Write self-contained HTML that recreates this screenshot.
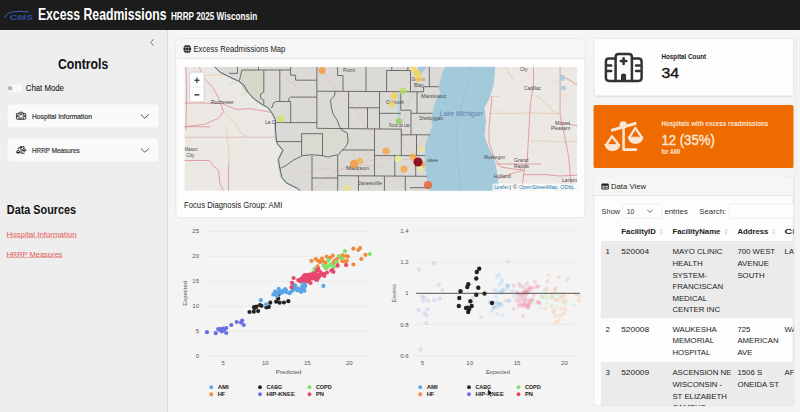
<!DOCTYPE html><html><head><meta charset="utf-8"><style>*{margin:0;padding:0}html,body{width:800px;height:412px;overflow:hidden;background:#f4f4f4}svg{display:block}</style></head><body><svg width="800" height="412" viewBox="0 0 800 412" font-family="Liberation Sans, sans-serif"><rect x="0" y="0" width="800" height="412" fill="#f4f4f4"/>
<rect x="0" y="30" width="167" height="382" fill="#eeeeee"/>
<rect x="167" y="30" width="1" height="382" fill="#d9d9d9"/>
<rect x="0" y="0" width="800" height="30" fill="#1c1c1c"/>
<path d="M4.4 17.8 Q7 12.8 12 12 Q18 11 28.8 11.9" stroke="#34549f" stroke-width="1.2" fill="none"/>
<text x="9.4" y="20" font-size="7.6" font-weight="bold" fill="#2d4d9c" textLength="23.6" lengthAdjust="spacingAndGlyphs" font-style="italic">CMS</text>
<text x="37.9" y="19.65" font-size="16.1" font-weight="bold" fill="#ffffff" textLength="128.6" lengthAdjust="spacingAndGlyphs">Excess Readmissions</text>
<text x="170.9" y="19.65" font-size="10.3" font-weight="bold" fill="#ffffff" textLength="86.4" lengthAdjust="spacingAndGlyphs">HRRP 2025 Wisconsin</text>
<path d="M153.8 39.2 L150.4 42.4 L153.7 45.6" stroke="#6a6a6a" stroke-width="0.9" fill="none"/>
<text x="57.9" y="68.8" font-size="15.3" font-weight="bold" fill="#111" textLength="50.4" lengthAdjust="spacingAndGlyphs">Controls</text>
<rect x="8" y="84.5" width="14" height="8" rx="1.5" fill="#f9f9f9"/>
<circle cx="10.1" cy="88.3" r="2.3" fill="#b5b5b5"/>
<text x="25.75" y="91.3" font-size="8.3" fill="#222" textLength="38.2" lengthAdjust="spacingAndGlyphs" stroke="#222" stroke-width="0.1">Chat Mode</text>
<rect x="7" y="104" width="152" height="24" rx="3" fill="#fafafa" stroke="#e6e6e6" stroke-width="0.6"/>
<text x="32" y="119" font-size="7.9" fill="#333" textLength="59.9" lengthAdjust="spacingAndGlyphs" stroke="#333" stroke-width="0.2">Hospital Information</text>
<path d="M140.8 114.5 L144.8 118.2 L148.8 114.5" stroke="#444" stroke-width="0.9" fill="none"/>
<rect x="7" y="138" width="152" height="24" rx="3" fill="#fafafa" stroke="#e6e6e6" stroke-width="0.6"/>
<text x="32" y="153" font-size="7.9" fill="#333" textLength="47.6" lengthAdjust="spacingAndGlyphs" stroke="#333" stroke-width="0.2">HRRP Measures</text>
<path d="M140.8 148.5 L144.8 152.2 L148.8 148.5" stroke="#444" stroke-width="0.9" fill="none"/>
<text x="6.8" y="214.2" font-size="12" font-weight="bold" fill="#111" textLength="69.3" lengthAdjust="spacingAndGlyphs">Data Sources</text>
<text x="6.45" y="236.6" font-size="8" fill="#e35a56" textLength="70.3" lengthAdjust="spacingAndGlyphs">Hospital Information</text>
<rect x="6.45" y="237.4" width="70.3" height="0.7" fill="#ee8d89"/>
<text x="6.45" y="256.5" font-size="8" fill="#e35a56" textLength="55.9" lengthAdjust="spacingAndGlyphs">HRRP Measures</text>
<rect x="6.45" y="257.3" width="55.9" height="0.7" fill="#ee8d89"/>
<rect x="175.8" y="38.6" width="409.2" height="179.2" rx="4" fill="#fdfdfd" stroke="#e2e2e2" stroke-width="0.8"/>
<path d="M176.2 58.4 L176.2 43 Q176.2 39 180.2 39 L580.6 39 Q584.6 39 584.6 43 L584.6 58.4 Z" fill="#f6f6f6"/>
<rect x="176.2" y="58.2" width="408.4" height="0.8" fill="#e3e3e3"/>
<circle cx="187.3" cy="49" r="3.9" fill="#1a1a1a"/><g stroke="#f6f6f6" stroke-width="0.45" fill="none"><ellipse cx="187.3" cy="49" rx="1.5" ry="3.7"/><line x1="183.5" y1="47.6" x2="191.1" y2="47.6"/><line x1="183.5" y1="50.4" x2="191.1" y2="50.4"/></g>
<text x="193.5" y="51.75" font-size="8.2" fill="#222" textLength="91.8" lengthAdjust="spacingAndGlyphs">Excess Readmissions Map</text>
<clipPath id="mclip"><rect x="184.4" y="66.7" width="393.0" height="124.10000000000001"/></clipPath>
<g clip-path="url(#mclip)">
<rect x="184.4" y="66.7" width="393.0" height="124.10000000000001" fill="#ece9e4"/>
<g fill="none" stroke-linejoin="round">
<path d="M222.0 108.6 L228.0 116.5 L236.0 124.4 L239.0 131.0 L243.0 134.0 L248.0 137.0" stroke="#e6c3a3" stroke-width="0.7"/>
<path d="M226.5 126.0 L227.0 137.0 L228.9 150.0 L228.9 162.0" stroke="#e6c3a3" stroke-width="0.7"/>
<path d="M489.0 113.4 L510.0 113.4 L530.0 113.0 L553.0 113.4 L560.0 114.0" stroke="#e6c3a3" stroke-width="0.7"/>
<path d="M530.0 141.0 L545.0 141.0 L560.0 142.0 L577.4 141.0" stroke="#e6c3a3" stroke-width="0.7"/>
<path d="M505.0 66.7 L510.0 75.0 L514.0 81.0" stroke="#e6c3a3" stroke-width="0.7"/>
<path d="M536.0 95.0 L545.0 103.0 L553.0 111.0 L560.0 114.0" stroke="#e6c3a3" stroke-width="0.7"/>
<path d="M484.6 96.6 L500.0 96.6" stroke="#e6c3a3" stroke-width="0.7"/>
<path d="M204.5 75.5 L226.6 74.7" stroke="#e6c3a3" stroke-width="0.7"/>
<path d="M184.4 137.2 L270.0 137.2 L276.5 137.2" stroke="#d6b8b8" stroke-width="0.8"/>
<path d="M184.4 103.0 L205.0 103.0 L222.0 103.5 L236.0 109.4 L250.0 108.6 L267.6 111.7 L276.0 114.0" stroke="#e0959f" stroke-width="0.9"/>
<path d="M184.4 126.7 L204.5 124.4 L218.7 118.0 L223.4 111.7 L222.0 107.0" stroke="#e0959f" stroke-width="0.9"/>
<path d="M199.0 66.7 L204.5 78.6 L213.2 88.0 L217.9 96.8 L221.9 107.0" stroke="#e0959f" stroke-width="0.9"/>
<path d="M186.0 66.7 L186.5 90.0 L186.0 130.0" stroke="#e0959f" stroke-width="0.9"/>
<path d="M184.4 126.8 L210.0 126.8" stroke="#e0959f" stroke-width="0.9"/>
<path d="M184.4 160.5 L209.6 160.5 L212.0 164.5 L218.5 170.0 L220.0 183.7 L223.3 190.8" stroke="#e0959f" stroke-width="0.9"/>
<path d="M228.9 162.0 L228.5 175.0 L228.5 190.8" stroke="#e0959f" stroke-width="0.9"/>
<path d="M240.8 83.4 L247.0 92.8" stroke="#e0959f" stroke-width="0.9"/>
<path d="M560.1 66.7 L560.1 115.0 L564.1 133.3 L568.7 157.7 L571.7 192.0" stroke="#e0959f" stroke-width="0.9"/>
<path d="M560.1 75.0 L571.0 81.0 L575.0 84.0 L577.4 84.0" stroke="#e0959f" stroke-width="0.9"/>
<path d="M533.5 66.7 L533.5 84.3 L530.5 102.7 L529.0 127.2 L527.4 157.7 L524.3 170.0 L521.3 192.0" stroke="#e0959f" stroke-width="0.9"/>
<path d="M492.0 96.6 L489.0 127.0 L489.0 142.0 L494.0 157.7 L501.0 167.0 L513.0 169.0 L524.3 170.0" stroke="#e0959f" stroke-width="0.9"/>
<path d="M523.0 174.6 L545.0 174.6 L560.0 176.0 L580.0 175.0" stroke="#e0959f" stroke-width="0.9"/>
<path d="M484.6 164.0 L500.0 164.0 L520.0 164.0 L541.0 164.0" stroke="#e0959f" stroke-width="0.9"/>
<path d="M560.1 122.0 L577.4 126.0" stroke="#e0959f" stroke-width="0.9"/>
<path d="M495.0 180.0 L510.0 174.0 L524.3 170.0" stroke="#e0959f" stroke-width="0.9"/>
</g>
<ellipse cx="232" cy="83" rx="5" ry="2" fill="#d3dfc6" opacity="0.45"/>
<ellipse cx="243" cy="95" rx="4" ry="2" fill="#d3dfc6" opacity="0.45"/>
<ellipse cx="500" cy="112" rx="3" ry="1.5" fill="#d3dfc6" opacity="0.45"/>
<ellipse cx="555" cy="82" rx="3" ry="2" fill="#d3dfc6" opacity="0.45"/>
<ellipse cx="566" cy="96" rx="2" ry="1.5" fill="#d3dfc6" opacity="0.45"/>
<ellipse cx="196" cy="192" rx="3" ry="1" fill="#d3dfc6" opacity="0.45"/>
<ellipse cx="215" cy="150" rx="2" ry="1" fill="#d3dfc6" opacity="0.45"/>
<path d="M214.8 66.7 L445.5 66.7 L442.0 73.6 L439.3 83.2 L438.5 86.7 L440.2 92.8 L436.0 100.0 L434.0 106.0 L432.5 113.0 L431.0 120.0 L432.5 126.0 L429.0 134.0 L426.5 141.0 L424.9 146.3 L424.5 159.0 L425.8 171.6 L427.0 180.4 L429.0 188.0 L429.5 191.5 L301.0 191.5 L297.5 188.4 L286.3 182.8 L281.8 177.2 L279.6 167.1 L278.5 159.3 L283.0 150.3 L277.4 143.6 L276.3 139.1 L275.5 129.0 L275.5 119.6 L272.3 113.3 L267.6 107.3 L261.3 103.9 L253.4 98.3 L247.9 92.0 L243.9 84.9 L238.4 81.0 L229.7 77.0 L220.3 72.3 Z" fill="#dcdad6"/>
<path d="M241.9 70 L263.75 70 L263.75 92 L260.6 94 L260.6 97.75 L263.75 100.25 L263.75 104.4 L255 100.25 L248.75 93.4 L246.25 86.5 L239.4 80.9 Z" fill="#d3d8c8"/>
<path d="M301.6 133.7 L322.5 133.7 L322.5 156 L301.6 155.6 Z" fill="#d9dbd1"/>
<path d="M322.5 128.3 L339.3 128.3 L341.7 130 L347.3 133.2 L348.1 142 L345.7 146.8 L340.9 151.6 L338.5 154.8 L332.9 155.6 L328.1 157.2 L322.5 155.6 Z" fill="#d9dbd1"/>
<ellipse cx="562.5" cy="78" rx="2.2" ry="3" fill="#a9cde0"/><ellipse cx="563.5" cy="88" rx="2.5" ry="2.2" fill="#a9cde0"/>
<g fill="none" stroke-linejoin="round">
<path d="M322.0 70.0 L330.0 80.0 L340.0 95.0 L352.0 105.0 L362.0 120.0 L372.0 135.0" stroke="#dcb9b9" stroke-width="0.5"/>
<path d="M350.0 168.0 L365.0 162.0 L380.0 158.0 L398.0 159.0 L413.0 160.0" stroke="#dcb9b9" stroke-width="0.5"/>
<path d="M354.0 164.0 L362.0 175.0 L370.0 190.0" stroke="#dcb9b9" stroke-width="0.5"/>
<path d="M355.0 160.0 L352.0 148.0 L349.0 138.0" stroke="#dcb9b9" stroke-width="0.5"/>
<path d="M354.0 164.0 L372.0 150.0 L380.0 145.0" stroke="#dcb9b9" stroke-width="0.5"/>
<path d="M354.0 164.0 L375.0 166.0 L385.0 167.0" stroke="#dcb9b9" stroke-width="0.5"/>
<path d="M354.0 164.0 L335.0 172.0 L322.0 182.0 L312.0 190.0" stroke="#dcb9b9" stroke-width="0.5"/>
<path d="M413.0 160.0 L405.0 170.0 L395.0 182.0" stroke="#dcb9b9" stroke-width="0.5"/>
<path d="M300.0 176.0 L315.0 170.0 L330.0 168.0 L350.0 168.0" stroke="#dcb9b9" stroke-width="0.5"/>
<path d="M420.0 80.0 L415.0 90.0 L410.0 100.0 L405.0 115.0 L400.0 130.0 L404.0 145.0 L413.0 160.0" stroke="#dcb9b9" stroke-width="0.5"/>
<path d="M413.0 160.0 L418.0 145.0 L425.0 135.0" stroke="#dcb9b9" stroke-width="0.5"/>
<path d="M280.0 73.0 L295.0 85.0 L317.0 105.0" stroke="#dcb9b9" stroke-width="0.5"/>
</g>
<path d="M445.5 66.2 L442.0 73.6 L439.3 83.2 L438.5 86.7 L440.2 92.8 L436.0 100.0 L434.0 106.0 L432.5 113.0 L431.0 120.0 L432.5 126.0 L429.0 134.0 L426.5 141.0 L424.9 146.3 L424.5 159.0 L425.8 171.6 L427.0 180.4 L429.0 188.0 L429.5 191.5 L499.9 192.0 L498.3 183.7 L496.8 170.0 L493.8 157.7 L489.2 148.6 L484.6 136.3 L486.1 121.0 L484.6 107.3 L489.2 99.6 L493.8 84.3 L495.3 66.2 Z" fill="#a3cadb"/>
<path d="M213.9 66.7 L219.4 72.3 L228.8 77.0 L237.5 81.0 L243.0 84.9 L247.0 92.0 L252.5 98.3 L260.4 103.9 L266.7 107.3 L271.4 113.3 L274.6 119.6 L274.6 129.0 L275.4 139.1 L276.5 143.6 L282.1 150.3 L277.6 159.3 L278.7 167.1 L280.9 177.2 L285.4 182.8 L296.6 188.4 L300.1 191.5" stroke="#b3cfd9" stroke-width="1.0" fill="none"/>
<path d="M417.9 66.2 L429.3 66.2 L425.3 68.8 L422.3 71.9 L420.5 74.5 L418.5 72.0 Z" fill="#a3cadb"/>
<path d="M397.4 93.5 L400.6 93.5 L400.4 117 L398 117 Z" fill="#b9d3dd"/>
<path d="M471.5 66.7 L466 90 L460.5 110 L457 126 L457.6 160 L460.8 192" stroke="#8fa8b4" stroke-width="0.5" stroke-dasharray="1.2 1" fill="none"/>
<g fill="none" stroke="#5a5a5a" stroke-width="0.85" stroke-linejoin="round">
<path d="M237.5 66.7 L237.5 73.4 L229.0 73.4"/>
<path d="M239.4 80.9 L241.9 70.0 L290.6 70.0"/>
<path d="M258.5 66.7 L258.5 70.0"/>
<path d="M263.8 70.0 L263.8 92.1 L260.6 94.0 L260.6 97.8 L263.8 100.2 L263.8 104.4"/>
<path d="M279.8 70.0 L279.8 101.5 L276.2 101.5 L273.1 103.4 L272.5 107.1 L270.7 107.8"/>
<path d="M290.6 66.7 L290.6 75.2 L295.6 75.2 L295.6 80.2 L316.9 80.2"/>
<path d="M316.9 66.7 L316.9 128.3"/>
<path d="M288.8 101.5 L288.8 98.8 L290.5 97.1 L316.9 97.1"/>
<path d="M279.8 101.5 L290.7 101.5 L290.7 122.6"/>
<path d="M276.3 122.6 L316.9 122.6"/>
<path d="M316.9 91.2 L423.6 91.8"/>
<path d="M423.6 91.8 L423.6 86.7 L438.5 86.7"/>
<path d="M337.6 66.7 L337.6 75.5 L343.0 75.5 L343.0 91.2"/>
<path d="M366.0 66.7 L366.0 91.2"/>
<path d="M348.6 91.2 L348.6 128.3"/>
<path d="M348.6 107.8 L379.5 107.8"/>
<path d="M367.5 107.8 L367.5 128.3"/>
<path d="M316.9 128.3 L401.3 129.2"/>
<path d="M301.6 133.7 L322.5 133.7"/>
<path d="M301.6 133.7 L301.6 155.6"/>
<path d="M322.5 133.7 L322.5 156.0"/>
<path d="M276.5 141.6 L301.6 141.6"/>
<path d="M302.4 155.6 L292.8 160.5 L286.4 165.3 L280.0 168.5"/>
<path d="M342.0 150.0 L374.5 150.0"/>
<path d="M374.5 128.8 L374.5 176.0"/>
<path d="M312.0 156.0 L312.0 191.5"/>
<path d="M337.7 155.5 L337.7 191.5"/>
<path d="M312.0 178.0 L337.7 178.0"/>
<path d="M337.7 175.7 L427.0 176.3"/>
<path d="M358.5 175.7 L358.5 191.5"/>
<path d="M384.4 176.2 L384.4 191.5"/>
<path d="M405.3 176.3 L405.3 191.5"/>
<path d="M410.0 187.7 L430.0 187.7"/>
<path d="M374.5 155.6 L425.0 155.6"/>
<path d="M394.8 155.6 L394.8 176.3"/>
<path d="M415.7 155.6 L415.7 176.3"/>
<path d="M401.3 129.2 L401.3 155.6"/>
<path d="M400.8 92.0 L400.8 110.2 L411.0 110.2"/>
<path d="M411.0 110.2 L411.0 134.8"/>
<path d="M401.3 134.8 L430.0 134.8"/>
<path d="M416.5 134.8 L416.5 155.6"/>
<path d="M379.5 91.5 L379.5 129.0"/>
<path d="M379.5 113.3 L400.8 113.3"/>
<path d="M411.0 113.3 L432.5 113.3"/>
<path d="M386.6 70.4 L386.6 91.5"/>
<path d="M386.6 70.4 L410.5 70.6"/>
<path d="M391.8 66.7 L391.8 70.4"/>
<path d="M407.9 66.7 L407.9 70.6"/>
<path d="M410.5 70.6 L410.5 91.7"/>
<path d="M417.0 91.7 L417.0 113.3"/>
<path d="M429.3 66.7 L429.3 86.7"/>
<path d="M335.2 91.3 L334.4 96.0 L330.5 99.9 L331.3 107.0 L332.8 113.3 L337.6 121.2 L339.3 126.0 L341.7 130.0 L347.3 133.2 L348.1 142.0 L345.7 146.8 L340.9 151.6 L338.5 154.8 L332.9 155.6 L328.1 157.2 L322.5 155.6 L312.0 154.8 L302.4 155.6" stroke="#555"/>
<path d="M214.8 66.7 L220.3 72.3 L229.7 77.0 L238.4 81.0 L243.9 84.9 L247.9 92.0 L253.4 98.3 L261.3 103.9 L267.6 107.3 L272.3 113.3 L275.5 119.6 L275.5 129.0 L276.3 139.1 L277.4 143.6 L283.0 150.3 L278.5 159.3 L279.6 167.1 L281.8 177.2 L286.3 182.8 L297.5 188.4 L301.0 191.5" stroke="#505a60" stroke-width="0.95"/>
</g>
<text x="211" y="104" font-size="5.6" fill="#484848" textLength="22.7" lengthAdjust="spacingAndGlyphs">Rochester</text>
<text x="184.8" y="151" font-size="5.6" fill="#484848" textLength="12.8" lengthAdjust="spacingAndGlyphs">Mason</text>
<text x="186.4" y="156.8" font-size="5.6" fill="#484848" textLength="8" lengthAdjust="spacingAndGlyphs">City</text>
<text x="265.2" y="124" font-size="5.6" fill="#484848" textLength="10" lengthAdjust="spacingAndGlyphs">La C</text>
<text x="343" y="71.5" font-size="5.6" fill="#484848" textLength="12" lengthAdjust="spacingAndGlyphs">Point</text>
<text x="411.5" y="80.5" font-size="5.6" fill="#484848" textLength="13" lengthAdjust="spacingAndGlyphs">Green</text>
<text x="414" y="87" font-size="5.6" fill="#484848" textLength="9.5" lengthAdjust="spacingAndGlyphs">Bay</text>
<text x="421" y="98" font-size="5.6" fill="#484848" textLength="25.5" lengthAdjust="spacingAndGlyphs">Manitowoc</text>
<text x="386" y="103.5" font-size="5.6" fill="#484848" textLength="18" lengthAdjust="spacingAndGlyphs">Oshkosh</text>
<text x="419" y="120" font-size="5.6" fill="#484848" textLength="24" lengthAdjust="spacingAndGlyphs">Sheboygan</text>
<text x="389" y="126.5" font-size="5.6" fill="#484848" textLength="21" lengthAdjust="spacingAndGlyphs">Fond du Lac</text>
<text x="346" y="169.5" font-size="5.6" fill="#484848" textLength="23" lengthAdjust="spacingAndGlyphs">Madison</text>
<text x="358" y="184.5" font-size="5.6" fill="#484848" textLength="24" lengthAdjust="spacingAndGlyphs">Janesville</text>
<text x="427" y="161.5" font-size="5.6" fill="#484848" textLength="11" lengthAdjust="spacingAndGlyphs">ukee</text>
<text x="520" y="71" font-size="5.6" fill="#484848" textLength="7.5" lengthAdjust="spacingAndGlyphs">City</text>
<text x="524" y="90" font-size="5.6" fill="#484848" textLength="17" lengthAdjust="spacingAndGlyphs">Cadillac</text>
<text x="555" y="124.5" font-size="5.6" fill="#484848" textLength="15" lengthAdjust="spacingAndGlyphs">Mount</text>
<text x="551" y="129.7" font-size="5.6" fill="#484848" textLength="19" lengthAdjust="spacingAndGlyphs">Pleasant</text>
<text x="484" y="159" font-size="5.6" fill="#484848" textLength="21" lengthAdjust="spacingAndGlyphs">Muskegon</text>
<text x="514" y="162" font-size="5.6" fill="#484848" textLength="14.5" lengthAdjust="spacingAndGlyphs">Grand</text>
<text x="514" y="168" font-size="5.6" fill="#484848" textLength="15" lengthAdjust="spacingAndGlyphs">Rapids</text>
<text x="493.8" y="178" font-size="5.6" fill="#484848" textLength="17" lengthAdjust="spacingAndGlyphs">Holland</text>
<text x="562" y="182" font-size="5.6" fill="#484848" textLength="15" lengthAdjust="spacingAndGlyphs">Lansin</text>
<text x="439.5" y="115.5" font-size="7" font-style="italic" fill="#5f80a8" textLength="43" lengthAdjust="spacingAndGlyphs">Lake Michigan</text>
<circle cx="322" cy="70.5" r="3.6" fill="#f7963b" fill-opacity="0.8"/>
<circle cx="281" cy="118.8" r="3.6" fill="#cfe35e" fill-opacity="0.8"/>
<circle cx="413" cy="68.4" r="3" fill="#f6d860" fill-opacity="0.8"/>
<circle cx="417" cy="73" r="3.6" fill="#f4d350" fill-opacity="0.8"/>
<circle cx="419" cy="78.5" r="3.6" fill="#f6cd5e" fill-opacity="0.8"/>
<circle cx="403" cy="91" r="3.6" fill="#b4df5a" fill-opacity="0.8"/>
<circle cx="394" cy="96" r="3.6" fill="#f7cb55" fill-opacity="0.8"/>
<circle cx="392" cy="104" r="3.1" fill="#f5d65c" fill-opacity="0.8"/>
<circle cx="399" cy="121" r="3.1" fill="#86d35a" fill-opacity="0.8"/>
<circle cx="354" cy="164" r="4.2" fill="#f7953a" fill-opacity="0.8"/>
<circle cx="360" cy="161" r="3.2" fill="#f5b245" fill-opacity="0.8"/>
<circle cx="347" cy="188" r="3.1" fill="#efe172" fill-opacity="0.8"/>
<circle cx="386" cy="151" r="3.6" fill="#f7a040" fill-opacity="0.8"/>
<circle cx="398" cy="159" r="3.6" fill="#e6ef95" fill-opacity="0.8"/>
<circle cx="413" cy="157" r="3.6" fill="#f6ad47" fill-opacity="0.8"/>
<circle cx="422" cy="164.5" r="3.1" fill="#f5a143" fill-opacity="0.8"/>
<circle cx="420" cy="168.5" r="3.1" fill="#f0ea92" fill-opacity="0.8"/>
<circle cx="404" cy="169" r="3.6" fill="#f7a242" fill-opacity="0.8"/>
<circle cx="422" cy="149" r="3.1" fill="#f1e48c" fill-opacity="0.8"/>
<circle cx="428" cy="185" r="4.1" fill="#e8612a" fill-opacity="0.8"/>
<circle cx="418" cy="162" r="4.6" fill="#8e0a1c" fill-opacity="0.95"/>
<rect x="189.6" y="72.1" width="14.6" height="29.8" rx="2" fill="#fefefe" stroke="#c9c9c9" stroke-width="0.8"/>
<rect x="190" y="86.8" width="13.8" height="0.5" fill="#d6d6d6"/>
<path d="M194.2 80.3 L199.6 80.3 M196.9 77.6 L196.9 83" stroke="#222" stroke-width="1.1"/>
<path d="M194.4 94.9 L199.4 94.9" stroke="#222" stroke-width="1.1"/>
<rect x="492.5" y="183.6" width="84.89999999999998" height="8" fill="#ffffff" fill-opacity="0.75"/>
<text x="494.5" y="189.3" font-size="5" fill="#1e7ab3" textLength="14" lengthAdjust="spacingAndGlyphs">Leaflet</text>
<text x="509.5" y="189.3" font-size="5" fill="#333" textLength="8" lengthAdjust="spacingAndGlyphs">| ©</text>
<text x="519" y="189.3" font-size="5" fill="#1e7ab3" textLength="55.5" lengthAdjust="spacingAndGlyphs">OpenStreetMap, ODbL</text>
</g>
<text x="184" y="208" font-size="8.2" fill="#222" textLength="98.3" lengthAdjust="spacingAndGlyphs">Focus Diagnosis Group: AMI</text>
<rect x="594.0" y="38.4" width="199.5" height="57.5" rx="2" fill="#fdfdfd" stroke="#e2e2e2" stroke-width="0.8"/>
<g stroke="#333" stroke-width="2.5" fill="none" stroke-linejoin="round" stroke-linecap="round">
<path d="M615.6 80.9 L615.6 56.9 Q615.6 53.9 618.6 53.9 L628.9 53.9 Q631.9 53.9 631.9 56.9 L631.9 80.9"/>
<path d="M615.6 58.5 L609 58.5 Q605.9 58.5 605.9 61.6 L605.9 77.8 Q605.9 80.9 609 80.9 L638.5 80.9 Q641.6 80.9 641.6 77.8 L641.6 61.6 Q641.6 58.5 638.5 58.5 L631.9 58.5"/>
<line x1="623.6" y1="58.3" x2="623.6" y2="63.9"/><line x1="620.8" y1="61.1" x2="626.4" y2="61.1"/>
<line x1="607.4" y1="65.4" x2="611.2" y2="65.4"/><line x1="607.4" y1="71" x2="611.2" y2="71"/>
<line x1="636" y1="65.4" x2="639.8" y2="65.4"/><line x1="636" y1="71" x2="639.8" y2="71"/>
</g>
<path d="M621 81 L621 76 Q621 73.6 623.55 73.6 Q626.1 73.6 626.1 76 L626.1 81 Z" fill="#333"/>
<text x="661.4" y="59" font-size="7.7" font-weight="bold" fill="#1a1a1a" textLength="44.8" lengthAdjust="spacingAndGlyphs">Hospital Count</text>
<text x="661.4" y="78.25" font-size="15" fill="#111" textLength="17.7" lengthAdjust="spacingAndGlyphs" stroke="#111" stroke-width="0.35">34</text>
<rect x="594.5" y="96" width="198.5" height="1.2" fill="#e2e2e2"/>
<rect x="795.6" y="36" width="0.8" height="376" fill="#e8e8e8"/>
<rect x="593.6" y="104.9" width="199.9" height="63" rx="1.5" fill="#ee6b00"/>
<g fill="#fbe6d6" stroke="#fbe6d6" stroke-linejoin="round" stroke-linecap="round">
<path d="M612.2 130.2 L635.2 123.5" stroke-width="2.9" fill="none"/>
<circle cx="623.2" cy="125" r="3.7" stroke="none"/>
<path d="M623.6 126 L623.6 149.6 L636 149.6" stroke-width="2.6" fill="none"/>
<path d="M606.2 145 L612 136.2 L618.8 145" stroke-width="2.3" fill="none"/>
<path d="M605 144.6 L620 144.6 Q619 150.6 612.5 150.6 Q606 150.6 605 144.6 Z" stroke-width="0.8"/>
<path d="M629.4 137.4 L635.3 128 L641.8 137.4" stroke-width="2.3" fill="none"/>
<path d="M628.3 137.2 L643 137.2 Q642 143.4 635.6 143.4 Q629.2 143.4 628.3 137.2 Z" stroke-width="0.8"/>
</g>
<text x="661.4" y="125.65" font-size="7.9" font-weight="bold" fill="#fbe6d6" textLength="106.9" lengthAdjust="spacingAndGlyphs">Hospitals with excess readmissions</text>
<text x="661.4" y="144.9" font-size="15" fill="#fbe6d6" textLength="53.5" lengthAdjust="spacingAndGlyphs" stroke="#fbe6d6" stroke-width="0.4">12 (35%)</text>
<text x="661.4" y="153.65" font-size="6.3" font-weight="bold" fill="#fbe6d6" textLength="18.8" lengthAdjust="spacingAndGlyphs">for AMI</text>
<g transform="translate(16.1,111.9) scale(0.26) translate(-604.6,-52.6)"><g stroke="#333" stroke-width="3.6" fill="none" stroke-linejoin="round" stroke-linecap="round">
<path d="M615.6 80.9 L615.6 56.9 Q615.6 53.9 618.6 53.9 L628.9 53.9 Q631.9 53.9 631.9 56.9 L631.9 80.9"/>
<path d="M615.6 58.5 L609 58.5 Q605.9 58.5 605.9 61.6 L605.9 77.8 Q605.9 80.9 609 80.9 L638.5 80.9 Q641.6 80.9 641.6 77.8 L641.6 61.6 Q641.6 58.5 638.5 58.5 L631.9 58.5"/>
<line x1="623.6" y1="58.3" x2="623.6" y2="63.9"/><line x1="620.8" y1="61.1" x2="626.4" y2="61.1"/>
<line x1="607.4" y1="65.4" x2="611.2" y2="65.4"/><line x1="607.4" y1="71" x2="611.2" y2="71"/>
<line x1="636" y1="65.4" x2="639.8" y2="65.4"/><line x1="636" y1="71" x2="639.8" y2="71"/>
</g>
<path d="M621 81 L621 76 Q621 73.6 623.55 73.6 Q626.1 73.6 626.1 76 L626.1 81 Z" fill="#333"/></g>
<g transform="translate(16.3,145.9) scale(0.255) translate(-605,-121)"><g fill="#2a2a2a" stroke="#2a2a2a" stroke-linejoin="round" stroke-linecap="round">
<path d="M612.2 130.2 L635.2 123.5" stroke-width="4" fill="none"/>
<circle cx="623.2" cy="125" r="3.7" stroke="none"/>
<path d="M623.6 126 L623.6 149.6 L636 149.6" stroke-width="3.8" fill="none"/>
<path d="M606.2 145 L612 136.2 L618.8 145" stroke-width="3.6" fill="none"/>
<path d="M605 144.6 L620 144.6 Q619 150.6 612.5 150.6 Q606 150.6 605 144.6 Z" stroke-width="0.8"/>
<path d="M629.4 137.4 L635.3 128 L641.8 137.4" stroke-width="3.6" fill="none"/>
<path d="M628.3 137.2 L643 137.2 Q642 143.4 635.6 143.4 Q629.2 143.4 628.3 137.2 Z" stroke-width="0.8"/>
</g></g>
<rect x="204" y="330.90" width="168" height="0.6" fill="#e3e3e3"/>
<text x="199" y="333.30" font-size="6" fill="#555" text-anchor="end">5</text>
<rect x="204" y="305.90" width="168" height="0.6" fill="#e3e3e3"/>
<text x="199" y="308.30" font-size="6" fill="#555" text-anchor="end">10</text>
<rect x="204" y="280.90" width="168" height="0.6" fill="#e3e3e3"/>
<text x="199" y="283.30" font-size="6" fill="#555" text-anchor="end">15</text>
<rect x="204" y="255.90" width="168" height="0.6" fill="#e3e3e3"/>
<text x="199" y="258.30" font-size="6" fill="#555" text-anchor="end">20</text>
<rect x="204" y="230.90" width="168" height="0.6" fill="#e3e3e3"/>
<text x="199" y="233.30" font-size="6" fill="#555" text-anchor="end">25</text>
<rect x="204" y="355.85" width="168" height="0.7" fill="#dfe6ec"/>
<text x="199" y="358.30" font-size="6" fill="#555" text-anchor="end">0</text>
<text x="223.25" y="365" font-size="6" fill="#555" text-anchor="middle">5</text>
<text x="265.25" y="365" font-size="6" fill="#555" text-anchor="middle">10</text>
<text x="307.25" y="365" font-size="6" fill="#555" text-anchor="middle">15</text>
<text x="349.25" y="365" font-size="6" fill="#555" text-anchor="middle">20</text>
<text x="275.75" y="374.3" font-size="6.2" fill="#555" textLength="25.75" lengthAdjust="spacingAndGlyphs">Predicted</text>
<text transform="translate(186.9,305.7) rotate(-90)" x="0" y="0" font-size="6.2" fill="#555" textLength="24.7" lengthAdjust="spacingAndGlyphs">Expected</text>
<rect x="413" y="324.20" width="167" height="0.6" fill="#e3e3e3"/>
<text x="408.6" y="326.60" font-size="6" fill="#555" text-anchor="end">0.8</text>
<rect x="413" y="261.80" width="167" height="0.6" fill="#e3e3e3"/>
<text x="408.6" y="264.20" font-size="6" fill="#555" text-anchor="end">1.2</text>
<rect x="413" y="230.60" width="167" height="0.6" fill="#e3e3e3"/>
<text x="408.6" y="233.00" font-size="6" fill="#555" text-anchor="end">1.4</text>
<rect x="413" y="355.35" width="167" height="0.7" fill="#dfe6ec"/>
<text x="408.6" y="357.80" font-size="6" fill="#555" text-anchor="end">0.6</text>
<text x="408.6" y="295.40" font-size="6" fill="#555" text-anchor="end">1</text>
<text x="422.35" y="365" font-size="6" fill="#555" text-anchor="middle">5</text>
<text x="469.70" y="365" font-size="6" fill="#555" text-anchor="middle">10</text>
<text x="517.05" y="365" font-size="6" fill="#555" text-anchor="middle">15</text>
<text x="564.40" y="365" font-size="6" fill="#555" text-anchor="middle">20</text>
<text x="486" y="374.3" font-size="6.2" fill="#555" textLength="24" lengthAdjust="spacingAndGlyphs">Expected</text>
<text transform="translate(396.2,302.5) rotate(-90)" x="0" y="0" font-size="6.2" fill="#555" textLength="18.5" lengthAdjust="spacingAndGlyphs">Excess</text>
<circle cx="207.0" cy="332.2" r="2.1" fill="#6a6ee2"/>
<circle cx="215.7" cy="333.2" r="2.1" fill="#6a6ee2"/>
<circle cx="218.2" cy="329.0" r="2.1" fill="#6a6ee2"/>
<circle cx="220.4" cy="329.0" r="2.1" fill="#6a6ee2"/>
<circle cx="221.8" cy="330.8" r="2.1" fill="#6a6ee2"/>
<circle cx="224.0" cy="330.0" r="2.1" fill="#6a6ee2"/>
<circle cx="226.2" cy="328.1" r="2.1" fill="#6a6ee2"/>
<circle cx="226.2" cy="333.0" r="2.1" fill="#6a6ee2"/>
<circle cx="231.3" cy="325.0" r="2.1" fill="#6a6ee2"/>
<circle cx="236.7" cy="322.0" r="2.1" fill="#6a6ee2"/>
<circle cx="242.2" cy="320.6" r="2.1" fill="#6a6ee2"/>
<circle cx="243.7" cy="325.0" r="2.1" fill="#6a6ee2"/>
<circle cx="221.8" cy="331.5" r="2.1" fill="#6a6ee2"/>
<circle cx="219.7" cy="330.0" r="2.1" fill="#6a6ee2"/>
<circle cx="223.0" cy="328.5" r="2.1" fill="#6a6ee2"/>
<circle cx="241.0" cy="322.5" r="2.1" fill="#6a6ee2"/>
<circle cx="249.5" cy="312.0" r="2.1" fill="#232323"/>
<circle cx="253.8" cy="311.7" r="2.1" fill="#232323"/>
<circle cx="258.1" cy="311.1" r="2.1" fill="#232323"/>
<circle cx="254.4" cy="308.1" r="2.1" fill="#232323"/>
<circle cx="266.4" cy="307.5" r="2.1" fill="#232323"/>
<circle cx="268.8" cy="306.9" r="2.1" fill="#232323"/>
<circle cx="254.0" cy="307.0" r="2.1" fill="#232323"/>
<circle cx="256.4" cy="306.5" r="2.1" fill="#232323"/>
<circle cx="261.5" cy="305.8" r="2.1" fill="#232323"/>
<circle cx="260.0" cy="305.1" r="2.1" fill="#232323"/>
<circle cx="279.6" cy="302.7" r="2.1" fill="#232323"/>
<circle cx="283.9" cy="302.5" r="2.1" fill="#232323"/>
<circle cx="288.3" cy="301.2" r="2.1" fill="#232323"/>
<circle cx="276.2" cy="301.7" r="2.1" fill="#232323"/>
<circle cx="270.3" cy="302.7" r="2.1" fill="#232323"/>
<circle cx="278.2" cy="298.4" r="2.1" fill="#232323"/>
<circle cx="256.0" cy="307.2" r="2.1" fill="#232323"/>
<circle cx="278.6" cy="294.4" r="2.1" fill="#232323"/>
<circle cx="293.8" cy="285.5" r="2.1" fill="#5aa5e6"/>
<circle cx="303.1" cy="282.4" r="2.1" fill="#5aa5e6"/>
<circle cx="273.3" cy="294.4" r="2.1" fill="#5aa5e6"/>
<circle cx="295.2" cy="288.7" r="2.1" fill="#5aa5e6"/>
<circle cx="289.4" cy="293.2" r="2.1" fill="#5aa5e6"/>
<circle cx="293.3" cy="289.9" r="2.1" fill="#5aa5e6"/>
<circle cx="285.7" cy="289.8" r="2.1" fill="#5aa5e6"/>
<circle cx="280.4" cy="291.3" r="2.1" fill="#5aa5e6"/>
<circle cx="293.8" cy="289.6" r="2.1" fill="#5aa5e6"/>
<circle cx="301.4" cy="289.3" r="2.1" fill="#5aa5e6"/>
<circle cx="305.2" cy="285.8" r="2.1" fill="#5aa5e6"/>
<circle cx="302.0" cy="286.4" r="2.1" fill="#5aa5e6"/>
<circle cx="283.4" cy="290.9" r="2.1" fill="#5aa5e6"/>
<circle cx="304.9" cy="286.1" r="2.1" fill="#5aa5e6"/>
<circle cx="286.5" cy="292.2" r="2.1" fill="#5aa5e6"/>
<circle cx="276.9" cy="295.9" r="2.1" fill="#5aa5e6"/>
<circle cx="275.1" cy="291.7" r="2.1" fill="#5aa5e6"/>
<circle cx="285.3" cy="289.2" r="2.1" fill="#5aa5e6"/>
<circle cx="282.8" cy="291.9" r="2.1" fill="#5aa5e6"/>
<circle cx="277.5" cy="293.1" r="2.1" fill="#5aa5e6"/>
<circle cx="297.8" cy="288.3" r="2.1" fill="#5aa5e6"/>
<circle cx="297.6" cy="290.5" r="2.1" fill="#5aa5e6"/>
<circle cx="276.6" cy="293.8" r="2.1" fill="#5aa5e6"/>
<circle cx="304.4" cy="290.8" r="2.1" fill="#5aa5e6"/>
<circle cx="304.0" cy="286.7" r="2.1" fill="#5aa5e6"/>
<circle cx="283.7" cy="290.6" r="2.1" fill="#5aa5e6"/>
<circle cx="278.7" cy="288.9" r="2.1" fill="#5aa5e6"/>
<circle cx="303.9" cy="289.1" r="2.1" fill="#5aa5e6"/>
<circle cx="277.2" cy="295.5" r="2.1" fill="#5aa5e6"/>
<circle cx="301.0" cy="291.8" r="2.1" fill="#5aa5e6"/>
<circle cx="291.1" cy="291.7" r="2.1" fill="#5aa5e6"/>
<circle cx="281.4" cy="292.9" r="2.1" fill="#5aa5e6"/>
<circle cx="296.6" cy="289.0" r="2.1" fill="#5aa5e6"/>
<circle cx="278.5" cy="293.0" r="2.1" fill="#5aa5e6"/>
<circle cx="323.4" cy="285.9" r="2.1" fill="#5aa5e6"/>
<circle cx="260.8" cy="300.2" r="2.1" fill="#5aa5e6"/>
<circle cx="266.2" cy="304.3" r="2.1" fill="#5aa5e6"/>
<circle cx="304.7" cy="283.8" r="2.1" fill="#5aa5e6"/>
<circle cx="295.0" cy="285.3" r="2.1" fill="#5aa5e6"/>
<circle cx="311.5" cy="260.9" r="2.1" fill="#f28a3c"/>
<circle cx="315.8" cy="259.1" r="2.1" fill="#f28a3c"/>
<circle cx="318.2" cy="260.9" r="2.1" fill="#f28a3c"/>
<circle cx="320.0" cy="262.1" r="2.1" fill="#f28a3c"/>
<circle cx="323.1" cy="261.5" r="2.1" fill="#f28a3c"/>
<circle cx="325.5" cy="262.9" r="2.1" fill="#f28a3c"/>
<circle cx="326.7" cy="256.6" r="2.1" fill="#f28a3c"/>
<circle cx="332.8" cy="255.7" r="2.1" fill="#f28a3c"/>
<circle cx="334.6" cy="260.9" r="2.1" fill="#f28a3c"/>
<circle cx="333.4" cy="262.9" r="2.1" fill="#f28a3c"/>
<circle cx="336.4" cy="259.7" r="2.1" fill="#f28a3c"/>
<circle cx="338.8" cy="257.2" r="2.1" fill="#f28a3c"/>
<circle cx="342.5" cy="255.4" r="2.1" fill="#f28a3c"/>
<circle cx="346.1" cy="256.0" r="2.1" fill="#f28a3c"/>
<circle cx="347.9" cy="256.6" r="2.1" fill="#f28a3c"/>
<circle cx="341.9" cy="260.9" r="2.1" fill="#f28a3c"/>
<circle cx="344.3" cy="261.5" r="2.1" fill="#f28a3c"/>
<circle cx="346.7" cy="260.9" r="2.1" fill="#f28a3c"/>
<circle cx="326.1" cy="268.2" r="2.1" fill="#f28a3c"/>
<circle cx="317.6" cy="266.3" r="2.1" fill="#f28a3c"/>
<circle cx="353.4" cy="248.7" r="2.1" fill="#f28a3c"/>
<circle cx="358.3" cy="250.0" r="2.1" fill="#f28a3c"/>
<circle cx="360.1" cy="248.1" r="2.1" fill="#f28a3c"/>
<circle cx="365.5" cy="254.8" r="2.1" fill="#f28a3c"/>
<circle cx="361.3" cy="259.1" r="2.1" fill="#f28a3c"/>
<circle cx="353.4" cy="264.5" r="2.1" fill="#f28a3c"/>
<circle cx="342.5" cy="257.6" r="2.1" fill="#f28a3c"/>
<circle cx="330.0" cy="258.0" r="2.1" fill="#f28a3c"/>
<circle cx="337.0" cy="263.0" r="2.1" fill="#f28a3c"/>
<circle cx="322.0" cy="258.5" r="2.1" fill="#f28a3c"/>
<circle cx="344.9" cy="251.2" r="2.1" fill="#7ee36a"/>
<circle cx="369.8" cy="254.0" r="2.1" fill="#7ee36a"/>
<circle cx="328.5" cy="260.3" r="2.1" fill="#7ee36a"/>
<circle cx="323.7" cy="265.7" r="2.1" fill="#7ee36a"/>
<circle cx="330.3" cy="264.5" r="2.1" fill="#7ee36a"/>
<circle cx="332.2" cy="265.7" r="2.1" fill="#7ee36a"/>
<circle cx="334.0" cy="266.9" r="2.1" fill="#7ee36a"/>
<circle cx="338.8" cy="256.0" r="2.1" fill="#7ee36a"/>
<circle cx="314.6" cy="268.8" r="2.1" fill="#7ee36a"/>
<circle cx="313.3" cy="272.4" r="2.1" fill="#7ee36a"/>
<circle cx="342.5" cy="258.5" r="2.1" fill="#7ee36a"/>
<circle cx="327.9" cy="266.3" r="2.1" fill="#7ee36a"/>
<circle cx="326.0" cy="268.0" r="2.1" fill="#7ee36a"/>
<circle cx="336.0" cy="262.0" r="2.1" fill="#7ee36a"/>
<circle cx="307.9" cy="281.5" r="2.1" fill="#e8476f"/>
<circle cx="316.0" cy="276.7" r="2.1" fill="#e8476f"/>
<circle cx="299.7" cy="280.4" r="2.1" fill="#e8476f"/>
<circle cx="310.3" cy="277.0" r="2.1" fill="#e8476f"/>
<circle cx="318.0" cy="275.6" r="2.1" fill="#e8476f"/>
<circle cx="318.4" cy="277.7" r="2.1" fill="#e8476f"/>
<circle cx="302.4" cy="278.6" r="2.1" fill="#e8476f"/>
<circle cx="312.4" cy="278.3" r="2.1" fill="#e8476f"/>
<circle cx="319.4" cy="275.9" r="2.1" fill="#e8476f"/>
<circle cx="314.0" cy="276.9" r="2.1" fill="#e8476f"/>
<circle cx="308.8" cy="280.3" r="2.1" fill="#e8476f"/>
<circle cx="324.2" cy="274.3" r="2.1" fill="#e8476f"/>
<circle cx="309.6" cy="278.8" r="2.1" fill="#e8476f"/>
<circle cx="305.3" cy="275.0" r="2.1" fill="#e8476f"/>
<circle cx="307.4" cy="275.1" r="2.1" fill="#e8476f"/>
<circle cx="313.1" cy="273.6" r="2.1" fill="#e8476f"/>
<circle cx="306.3" cy="277.1" r="2.1" fill="#e8476f"/>
<circle cx="310.0" cy="274.7" r="2.1" fill="#e8476f"/>
<circle cx="307.5" cy="278.2" r="2.1" fill="#e8476f"/>
<circle cx="314.2" cy="277.7" r="2.1" fill="#e8476f"/>
<circle cx="303.1" cy="277.3" r="2.1" fill="#e8476f"/>
<circle cx="315.7" cy="273.0" r="2.1" fill="#e8476f"/>
<circle cx="304.5" cy="276.1" r="2.1" fill="#e8476f"/>
<circle cx="315.8" cy="279.5" r="2.1" fill="#e8476f"/>
<circle cx="317.0" cy="270.2" r="2.1" fill="#e8476f"/>
<circle cx="318.8" cy="275.0" r="2.1" fill="#e8476f"/>
<circle cx="304.2" cy="275.6" r="2.1" fill="#e8476f"/>
<circle cx="308.4" cy="274.9" r="2.1" fill="#e8476f"/>
<circle cx="317.0" cy="280.0" r="2.1" fill="#e8476f"/>
<circle cx="311.0" cy="275.5" r="2.1" fill="#e8476f"/>
<circle cx="313.4" cy="274.2" r="2.1" fill="#e8476f"/>
<circle cx="316.3" cy="276.9" r="2.1" fill="#e8476f"/>
<circle cx="307.8" cy="277.1" r="2.1" fill="#e8476f"/>
<circle cx="314.1" cy="276.4" r="2.1" fill="#e8476f"/>
<circle cx="309.4" cy="278.9" r="2.1" fill="#e8476f"/>
<circle cx="300.7" cy="281.5" r="2.1" fill="#e8476f"/>
<circle cx="304.6" cy="280.4" r="2.1" fill="#e8476f"/>
<circle cx="305.3" cy="276.8" r="2.1" fill="#e8476f"/>
<circle cx="303.8" cy="279.5" r="2.1" fill="#e8476f"/>
<circle cx="307.4" cy="280.8" r="2.1" fill="#e8476f"/>
<circle cx="301.6" cy="278.5" r="2.1" fill="#e8476f"/>
<circle cx="298.3" cy="280.1" r="2.1" fill="#e8476f"/>
<circle cx="293.6" cy="278.0" r="2.1" fill="#e8476f"/>
<circle cx="292.1" cy="282.9" r="2.1" fill="#e8476f"/>
<circle cx="291.6" cy="287.2" r="2.1" fill="#e8476f"/>
<circle cx="310.5" cy="282.9" r="2.1" fill="#e8476f"/>
<circle cx="318.3" cy="269.2" r="2.1" fill="#e8476f"/>
<circle cx="331.4" cy="270.6" r="2.1" fill="#e8476f"/>
<circle cx="323.0" cy="274.0" r="2.1" fill="#e8476f"/>
<circle cx="327.0" cy="272.5" r="2.1" fill="#e8476f"/>
<circle cx="346.1" cy="265.1" r="2.1" fill="#e8476f"/>
<circle cx="337.6" cy="265.7" r="2.1" fill="#e8476f"/>
<circle cx="332.2" cy="270.0" r="2.1" fill="#e8476f"/>
<circle cx="333.4" cy="271.8" r="2.1" fill="#e8476f"/>
<circle cx="318.2" cy="270.0" r="2.1" fill="#e8476f"/>
<circle cx="320.6" cy="272.4" r="2.1" fill="#e8476f"/>
<circle cx="322.5" cy="274.8" r="2.1" fill="#e8476f"/>
<circle cx="324.3" cy="276.0" r="2.1" fill="#e8476f"/>
<circle cx="420.5" cy="349.7" r="2.1" fill="#6a6ee2" fill-opacity="0.17"/>
<circle cx="418.6" cy="310.2" r="2.1" fill="#6a6ee2" fill-opacity="0.17"/>
<circle cx="426.5" cy="323.2" r="2.1" fill="#6a6ee2" fill-opacity="0.17"/>
<circle cx="426.5" cy="315.6" r="2.1" fill="#6a6ee2" fill-opacity="0.17"/>
<circle cx="423.1" cy="301.1" r="2.1" fill="#6a6ee2" fill-opacity="0.17"/>
<circle cx="424.6" cy="297.8" r="2.1" fill="#6a6ee2" fill-opacity="0.17"/>
<circle cx="428.2" cy="300.8" r="2.1" fill="#6a6ee2" fill-opacity="0.17"/>
<circle cx="418.9" cy="269.4" r="2.1" fill="#6a6ee2" fill-opacity="0.17"/>
<circle cx="434.1" cy="300.3" r="2.1" fill="#6a6ee2" fill-opacity="0.17"/>
<circle cx="439.8" cy="298.7" r="2.1" fill="#6a6ee2" fill-opacity="0.17"/>
<circle cx="442.4" cy="290.3" r="2.1" fill="#6a6ee2" fill-opacity="0.17"/>
<circle cx="434.1" cy="263.4" r="2.1" fill="#6a6ee2" fill-opacity="0.17"/>
<circle cx="421.8" cy="296.9" r="2.1" fill="#6a6ee2" fill-opacity="0.17"/>
<circle cx="424.6" cy="313.0" r="2.1" fill="#6a6ee2" fill-opacity="0.17"/>
<circle cx="427.5" cy="309.3" r="2.1" fill="#6a6ee2" fill-opacity="0.17"/>
<circle cx="438.8" cy="284.7" r="2.1" fill="#6a6ee2" fill-opacity="0.17"/>
<circle cx="508.8" cy="301.5" r="2.1" fill="#5aa5e6" fill-opacity="0.17"/>
<circle cx="514.8" cy="295.9" r="2.1" fill="#5aa5e6" fill-opacity="0.17"/>
<circle cx="492.0" cy="310.9" r="2.1" fill="#5aa5e6" fill-opacity="0.17"/>
<circle cx="502.9" cy="292.7" r="2.1" fill="#5aa5e6" fill-opacity="0.17"/>
<circle cx="494.3" cy="289.9" r="2.1" fill="#5aa5e6" fill-opacity="0.17"/>
<circle cx="500.6" cy="292.3" r="2.1" fill="#5aa5e6" fill-opacity="0.17"/>
<circle cx="500.8" cy="303.3" r="2.1" fill="#5aa5e6" fill-opacity="0.17"/>
<circle cx="497.9" cy="307.4" r="2.1" fill="#5aa5e6" fill-opacity="0.17"/>
<circle cx="501.2" cy="292.5" r="2.1" fill="#5aa5e6" fill-opacity="0.17"/>
<circle cx="501.7" cy="282.4" r="2.1" fill="#5aa5e6" fill-opacity="0.17"/>
<circle cx="508.3" cy="285.8" r="2.1" fill="#5aa5e6" fill-opacity="0.17"/>
<circle cx="507.1" cy="288.6" r="2.1" fill="#5aa5e6" fill-opacity="0.17"/>
<circle cx="498.6" cy="303.9" r="2.1" fill="#5aa5e6" fill-opacity="0.17"/>
<circle cx="507.8" cy="285.6" r="2.1" fill="#5aa5e6" fill-opacity="0.17"/>
<circle cx="496.2" cy="296.5" r="2.1" fill="#5aa5e6" fill-opacity="0.17"/>
<circle cx="489.2" cy="302.0" r="2.1" fill="#5aa5e6" fill-opacity="0.17"/>
<circle cx="497.2" cy="314.3" r="2.1" fill="#5aa5e6" fill-opacity="0.17"/>
<circle cx="501.9" cy="305.2" r="2.1" fill="#5aa5e6" fill-opacity="0.17"/>
<circle cx="496.9" cy="302.8" r="2.1" fill="#5aa5e6" fill-opacity="0.17"/>
<circle cx="494.6" cy="307.8" r="2.1" fill="#5aa5e6" fill-opacity="0.17"/>
<circle cx="503.6" cy="290.0" r="2.1" fill="#5aa5e6" fill-opacity="0.17"/>
<circle cx="499.4" cy="284.8" r="2.1" fill="#5aa5e6" fill-opacity="0.17"/>
<circle cx="493.1" cy="307.4" r="2.1" fill="#5aa5e6" fill-opacity="0.17"/>
<circle cx="498.9" cy="274.5" r="2.1" fill="#5aa5e6" fill-opacity="0.17"/>
<circle cx="506.6" cy="285.2" r="2.1" fill="#5aa5e6" fill-opacity="0.17"/>
<circle cx="499.2" cy="304.2" r="2.1" fill="#5aa5e6" fill-opacity="0.17"/>
<circle cx="502.5" cy="315.0" r="2.1" fill="#5aa5e6" fill-opacity="0.17"/>
<circle cx="502.0" cy="279.5" r="2.1" fill="#5aa5e6" fill-opacity="0.17"/>
<circle cx="490.1" cy="302.6" r="2.1" fill="#5aa5e6" fill-opacity="0.17"/>
<circle cx="497.1" cy="276.8" r="2.1" fill="#5aa5e6" fill-opacity="0.17"/>
<circle cx="497.1" cy="291.0" r="2.1" fill="#5aa5e6" fill-opacity="0.17"/>
<circle cx="494.8" cy="302.3" r="2.1" fill="#5aa5e6" fill-opacity="0.17"/>
<circle cx="502.3" cy="289.9" r="2.1" fill="#5aa5e6" fill-opacity="0.17"/>
<circle cx="494.8" cy="306.5" r="2.1" fill="#5aa5e6" fill-opacity="0.17"/>
<circle cx="508.1" cy="261.5" r="2.1" fill="#5aa5e6" fill-opacity="0.17"/>
<circle cx="481.1" cy="317.4" r="2.1" fill="#5aa5e6" fill-opacity="0.17"/>
<circle cx="473.3" cy="297.3" r="2.1" fill="#5aa5e6" fill-opacity="0.17"/>
<circle cx="512.1" cy="291.0" r="2.1" fill="#5aa5e6" fill-opacity="0.17"/>
<circle cx="509.3" cy="300.3" r="2.1" fill="#5aa5e6" fill-opacity="0.17"/>
<circle cx="555.5" cy="322.4" r="2.1" fill="#f28a3c" fill-opacity="0.17"/>
<circle cx="558.9" cy="320.6" r="2.1" fill="#f28a3c" fill-opacity="0.17"/>
<circle cx="555.5" cy="315.9" r="2.1" fill="#f28a3c" fill-opacity="0.17"/>
<circle cx="553.2" cy="312.4" r="2.1" fill="#f28a3c" fill-opacity="0.17"/>
<circle cx="554.4" cy="310.2" r="2.1" fill="#f28a3c" fill-opacity="0.17"/>
<circle cx="551.7" cy="305.7" r="2.1" fill="#f28a3c" fill-opacity="0.17"/>
<circle cx="563.6" cy="313.7" r="2.1" fill="#f28a3c" fill-opacity="0.17"/>
<circle cx="565.3" cy="309.3" r="2.1" fill="#f28a3c" fill-opacity="0.17"/>
<circle cx="555.5" cy="299.9" r="2.1" fill="#f28a3c" fill-opacity="0.17"/>
<circle cx="551.7" cy="297.9" r="2.1" fill="#f28a3c" fill-opacity="0.17"/>
<circle cx="557.8" cy="300.0" r="2.1" fill="#f28a3c" fill-opacity="0.17"/>
<circle cx="562.5" cy="301.5" r="2.1" fill="#f28a3c" fill-opacity="0.17"/>
<circle cx="565.9" cy="300.8" r="2.1" fill="#f28a3c" fill-opacity="0.17"/>
<circle cx="564.8" cy="296.5" r="2.1" fill="#f28a3c" fill-opacity="0.17"/>
<circle cx="563.6" cy="293.9" r="2.1" fill="#f28a3c" fill-opacity="0.17"/>
<circle cx="555.5" cy="292.8" r="2.1" fill="#f28a3c" fill-opacity="0.17"/>
<circle cx="554.4" cy="289.4" r="2.1" fill="#f28a3c" fill-opacity="0.17"/>
<circle cx="555.5" cy="288.1" r="2.1" fill="#f28a3c" fill-opacity="0.17"/>
<circle cx="541.7" cy="296.5" r="2.1" fill="#f28a3c" fill-opacity="0.17"/>
<circle cx="545.3" cy="308.5" r="2.1" fill="#f28a3c" fill-opacity="0.17"/>
<circle cx="578.6" cy="300.6" r="2.1" fill="#f28a3c" fill-opacity="0.17"/>
<circle cx="576.1" cy="294.5" r="2.1" fill="#f28a3c" fill-opacity="0.17"/>
<circle cx="579.7" cy="295.7" r="2.1" fill="#f28a3c" fill-opacity="0.17"/>
<circle cx="567.1" cy="280.6" r="2.1" fill="#f28a3c" fill-opacity="0.17"/>
<circle cx="558.9" cy="277.1" r="2.1" fill="#f28a3c" fill-opacity="0.17"/>
<circle cx="548.7" cy="275.0" r="2.1" fill="#f28a3c" fill-opacity="0.17"/>
<circle cx="561.7" cy="297.4" r="2.1" fill="#f28a3c" fill-opacity="0.17"/>
<circle cx="561.0" cy="308.6" r="2.1" fill="#f28a3c" fill-opacity="0.17"/>
<circle cx="551.5" cy="294.1" r="2.1" fill="#f28a3c" fill-opacity="0.17"/>
<circle cx="560.0" cy="315.5" r="2.1" fill="#f28a3c" fill-opacity="0.17"/>
<circle cx="573.9" cy="304.6" r="2.1" fill="#7ee36a" fill-opacity="0.17"/>
<circle cx="568.6" cy="278.0" r="2.1" fill="#7ee36a" fill-opacity="0.17"/>
<circle cx="556.6" cy="306.7" r="2.1" fill="#7ee36a" fill-opacity="0.17"/>
<circle cx="546.4" cy="303.1" r="2.1" fill="#7ee36a" fill-opacity="0.17"/>
<circle cx="548.7" cy="298.4" r="2.1" fill="#7ee36a" fill-opacity="0.17"/>
<circle cx="546.4" cy="294.4" r="2.1" fill="#7ee36a" fill-opacity="0.17"/>
<circle cx="544.1" cy="290.5" r="2.1" fill="#7ee36a" fill-opacity="0.17"/>
<circle cx="564.8" cy="303.3" r="2.1" fill="#7ee36a" fill-opacity="0.17"/>
<circle cx="540.5" cy="307.6" r="2.1" fill="#7ee36a" fill-opacity="0.17"/>
<circle cx="533.7" cy="303.0" r="2.1" fill="#7ee36a" fill-opacity="0.17"/>
<circle cx="560.0" cy="296.0" r="2.1" fill="#7ee36a" fill-opacity="0.17"/>
<circle cx="545.3" cy="297.8" r="2.1" fill="#7ee36a" fill-opacity="0.17"/>
<circle cx="542.1" cy="296.9" r="2.1" fill="#7ee36a" fill-opacity="0.17"/>
<circle cx="553.4" cy="296.8" r="2.1" fill="#7ee36a" fill-opacity="0.17"/>
<circle cx="516.5" cy="291.8" r="2.1" fill="#e8476f" fill-opacity="0.17"/>
<circle cx="525.6" cy="291.9" r="2.1" fill="#e8476f" fill-opacity="0.17"/>
<circle cx="518.6" cy="304.2" r="2.1" fill="#e8476f" fill-opacity="0.17"/>
<circle cx="524.9" cy="297.8" r="2.1" fill="#e8476f" fill-opacity="0.17"/>
<circle cx="527.6" cy="291.7" r="2.1" fill="#e8476f" fill-opacity="0.17"/>
<circle cx="523.6" cy="287.0" r="2.1" fill="#e8476f" fill-opacity="0.17"/>
<circle cx="522.0" cy="304.3" r="2.1" fill="#e8476f" fill-opacity="0.17"/>
<circle cx="522.6" cy="293.0" r="2.1" fill="#e8476f" fill-opacity="0.17"/>
<circle cx="527.1" cy="289.6" r="2.1" fill="#e8476f" fill-opacity="0.17"/>
<circle cx="525.3" cy="293.9" r="2.1" fill="#e8476f" fill-opacity="0.17"/>
<circle cx="518.8" cy="293.4" r="2.1" fill="#e8476f" fill-opacity="0.17"/>
<circle cx="530.1" cy="287.3" r="2.1" fill="#e8476f" fill-opacity="0.17"/>
<circle cx="521.6" cy="295.3" r="2.1" fill="#e8476f" fill-opacity="0.17"/>
<circle cx="528.7" cy="307.4" r="2.1" fill="#e8476f" fill-opacity="0.17"/>
<circle cx="528.5" cy="304.8" r="2.1" fill="#e8476f" fill-opacity="0.17"/>
<circle cx="531.4" cy="301.0" r="2.1" fill="#e8476f" fill-opacity="0.17"/>
<circle cx="524.8" cy="302.5" r="2.1" fill="#e8476f" fill-opacity="0.17"/>
<circle cx="529.3" cy="302.5" r="2.1" fill="#e8476f" fill-opacity="0.17"/>
<circle cx="522.8" cy="299.1" r="2.1" fill="#e8476f" fill-opacity="0.17"/>
<circle cx="523.6" cy="292.0" r="2.1" fill="#e8476f" fill-opacity="0.17"/>
<circle cx="524.4" cy="305.9" r="2.1" fill="#e8476f" fill-opacity="0.17"/>
<circle cx="532.7" cy="299.4" r="2.1" fill="#e8476f" fill-opacity="0.17"/>
<circle cx="526.7" cy="306.4" r="2.1" fill="#e8476f" fill-opacity="0.17"/>
<circle cx="520.4" cy="286.5" r="2.1" fill="#e8476f" fill-opacity="0.17"/>
<circle cx="537.9" cy="302.7" r="2.1" fill="#e8476f" fill-opacity="0.17"/>
<circle cx="528.9" cy="292.1" r="2.1" fill="#e8476f" fill-opacity="0.17"/>
<circle cx="527.7" cy="307.7" r="2.1" fill="#e8476f" fill-opacity="0.17"/>
<circle cx="529.1" cy="304.1" r="2.1" fill="#e8476f" fill-opacity="0.17"/>
<circle cx="519.3" cy="283.9" r="2.1" fill="#e8476f" fill-opacity="0.17"/>
<circle cx="527.8" cy="300.0" r="2.1" fill="#e8476f" fill-opacity="0.17"/>
<circle cx="530.4" cy="299.8" r="2.1" fill="#e8476f" fill-opacity="0.17"/>
<circle cx="525.2" cy="291.1" r="2.1" fill="#e8476f" fill-opacity="0.17"/>
<circle cx="524.8" cy="300.7" r="2.1" fill="#e8476f" fill-opacity="0.17"/>
<circle cx="526.1" cy="294.7" r="2.1" fill="#e8476f" fill-opacity="0.17"/>
<circle cx="521.4" cy="295.4" r="2.1" fill="#e8476f" fill-opacity="0.17"/>
<circle cx="516.5" cy="300.8" r="2.1" fill="#e8476f" fill-opacity="0.17"/>
<circle cx="518.6" cy="298.2" r="2.1" fill="#e8476f" fill-opacity="0.17"/>
<circle cx="525.3" cy="304.2" r="2.1" fill="#e8476f" fill-opacity="0.17"/>
<circle cx="520.2" cy="300.9" r="2.1" fill="#e8476f" fill-opacity="0.17"/>
<circle cx="517.8" cy="294.0" r="2.1" fill="#e8476f" fill-opacity="0.17"/>
<circle cx="522.3" cy="305.5" r="2.1" fill="#e8476f" fill-opacity="0.17"/>
<circle cx="519.1" cy="306.5" r="2.1" fill="#e8476f" fill-opacity="0.17"/>
<circle cx="523.1" cy="315.9" r="2.1" fill="#e8476f" fill-opacity="0.17"/>
<circle cx="513.8" cy="308.9" r="2.1" fill="#e8476f" fill-opacity="0.17"/>
<circle cx="505.7" cy="300.8" r="2.1" fill="#e8476f" fill-opacity="0.17"/>
<circle cx="513.8" cy="285.6" r="2.1" fill="#e8476f" fill-opacity="0.17"/>
<circle cx="539.8" cy="303.0" r="2.1" fill="#e8476f" fill-opacity="0.17"/>
<circle cx="537.1" cy="286.4" r="2.1" fill="#e8476f" fill-opacity="0.17"/>
<circle cx="530.7" cy="289.2" r="2.1" fill="#e8476f" fill-opacity="0.17"/>
<circle cx="533.5" cy="287.6" r="2.1" fill="#e8476f" fill-opacity="0.17"/>
<circle cx="547.5" cy="281.3" r="2.1" fill="#e8476f" fill-opacity="0.17"/>
<circle cx="546.4" cy="288.9" r="2.1" fill="#e8476f" fill-opacity="0.17"/>
<circle cx="538.3" cy="286.7" r="2.1" fill="#e8476f" fill-opacity="0.17"/>
<circle cx="534.9" cy="281.9" r="2.1" fill="#e8476f" fill-opacity="0.17"/>
<circle cx="538.3" cy="301.8" r="2.1" fill="#e8476f" fill-opacity="0.17"/>
<circle cx="533.7" cy="294.9" r="2.1" fill="#e8476f" fill-opacity="0.17"/>
<circle cx="529.2" cy="288.2" r="2.1" fill="#e8476f" fill-opacity="0.17"/>
<circle cx="526.9" cy="283.7" r="2.1" fill="#e8476f" fill-opacity="0.17"/>
<rect x="416" y="292.80" width="164" height="1" fill="#555"/>
<circle cx="458.8" cy="306.0" r="2.2" fill="#232323"/>
<circle cx="459.3" cy="298.0" r="2.2" fill="#232323"/>
<circle cx="460.5" cy="291.3" r="2.2" fill="#232323"/>
<circle cx="466.1" cy="308.0" r="2.2" fill="#232323"/>
<circle cx="467.3" cy="287.0" r="2.2" fill="#232323"/>
<circle cx="468.3" cy="284.3" r="2.2" fill="#232323"/>
<circle cx="468.2" cy="312.0" r="2.2" fill="#232323"/>
<circle cx="469.2" cy="309.0" r="2.2" fill="#232323"/>
<circle cx="470.4" cy="301.3" r="2.2" fill="#232323"/>
<circle cx="471.7" cy="306.0" r="2.2" fill="#232323"/>
<circle cx="476.3" cy="278.5" r="2.2" fill="#232323"/>
<circle cx="476.8" cy="272.0" r="2.2" fill="#232323"/>
<circle cx="479.2" cy="268.7" r="2.2" fill="#232323"/>
<circle cx="478.3" cy="287.7" r="2.2" fill="#232323"/>
<circle cx="476.3" cy="294.7" r="2.2" fill="#232323"/>
<circle cx="484.5" cy="293.6" r="2.2" fill="#232323"/>
<circle cx="467.8" cy="307.7" r="2.2" fill="#232323"/>
<circle cx="492.0" cy="303.0" r="2.2" fill="#232323"/>
<circle cx="211.25" cy="387.2" r="1.9" fill="#5aa5e6"/>
<text x="217.65" y="389.30" font-size="5.9" font-weight="bold" fill="#222" textLength="11.1" lengthAdjust="spacingAndGlyphs">AMI</text>
<circle cx="211.25" cy="394.25" r="1.9" fill="#f28a3c"/>
<text x="217.65" y="396.35" font-size="5.9" font-weight="bold" fill="#222" textLength="7.8" lengthAdjust="spacingAndGlyphs">HF</text>
<circle cx="260.00" cy="387.2" r="1.9" fill="#232323"/>
<text x="266.40" y="389.30" font-size="5.9" font-weight="bold" fill="#222" textLength="15.8" lengthAdjust="spacingAndGlyphs">CABG</text>
<circle cx="260.00" cy="394.25" r="1.9" fill="#6a6ee2"/>
<text x="266.40" y="396.35" font-size="5.9" font-weight="bold" fill="#222" textLength="28.5" lengthAdjust="spacingAndGlyphs">HIP-KNEE</text>
<circle cx="309.50" cy="387.2" r="1.9" fill="#7ee36a"/>
<text x="315.90" y="389.30" font-size="5.9" font-weight="bold" fill="#222" textLength="15.8" lengthAdjust="spacingAndGlyphs">COPD</text>
<circle cx="309.50" cy="394.25" r="1.9" fill="#e8476f"/>
<text x="315.90" y="396.35" font-size="5.9" font-weight="bold" fill="#222" textLength="8" lengthAdjust="spacingAndGlyphs">PN</text>
<circle cx="420.25" cy="387.2" r="1.9" fill="#5aa5e6"/>
<text x="426.65" y="389.30" font-size="5.9" font-weight="bold" fill="#222" textLength="11.1" lengthAdjust="spacingAndGlyphs">AMI</text>
<circle cx="420.25" cy="394.25" r="1.9" fill="#f28a3c"/>
<text x="426.65" y="396.35" font-size="5.9" font-weight="bold" fill="#222" textLength="7.8" lengthAdjust="spacingAndGlyphs">HF</text>
<circle cx="469.00" cy="387.2" r="1.9" fill="#232323"/>
<text x="475.40" y="389.30" font-size="5.9" font-weight="bold" fill="#222" textLength="15.8" lengthAdjust="spacingAndGlyphs">CABG</text>
<circle cx="469.00" cy="394.25" r="1.9" fill="#6a6ee2"/>
<text x="475.40" y="396.35" font-size="5.9" font-weight="bold" fill="#222" textLength="28.5" lengthAdjust="spacingAndGlyphs">HIP-KNEE</text>
<circle cx="518.50" cy="387.2" r="1.9" fill="#7ee36a"/>
<text x="524.90" y="389.30" font-size="5.9" font-weight="bold" fill="#222" textLength="15.8" lengthAdjust="spacingAndGlyphs">COPD</text>
<circle cx="518.50" cy="394.25" r="1.9" fill="#e8476f"/>
<text x="524.90" y="396.35" font-size="5.9" font-weight="bold" fill="#222" textLength="8" lengthAdjust="spacingAndGlyphs">PN</text>
<path d="M487.8 388.6 L487.8 396.1 L489.5 394.6 L490.8 397.2 L491.9 396.7 L490.7 394.1 L492.9 394 Z" fill="#111" stroke="#fff" stroke-width="0.5"/>
<rect x="593.9" y="176.2" width="199.2" height="229.8" rx="4" fill="#fdfdfd" stroke="#e2e2e2" stroke-width="0.8"/>
<path d="M594.3 195.4 L594.3 180.6 Q594.3 176.6 598.3 176.6 L788.7 176.6 Q792.7 176.6 792.7 180.6 L792.7 195.4 Z" fill="#f6f6f6"/>
<rect x="594.3" y="195" width="198.4" height="0.8" fill="#e3e3e3"/>
<g><rect x="601.4" y="183.6" width="7.4" height="5.8" rx="1" fill="#222"/><rect x="602.4" y="185.8" width="2.3" height="1.1" fill="#f6f6f6"/><rect x="605.5" y="185.8" width="2.3" height="1.1" fill="#f6f6f6"/><rect x="602.4" y="187.5" width="2.3" height="1.1" fill="#f6f6f6"/><rect x="605.5" y="187.5" width="2.3" height="1.1" fill="#f6f6f6"/></g>
<text x="611" y="188.8" font-size="7.7" fill="#222" textLength="35" lengthAdjust="spacingAndGlyphs">Data View</text>
<text x="601.6" y="213.8" font-size="8" fill="#333" textLength="18.6" lengthAdjust="spacingAndGlyphs">Show</text>
<rect x="622.3" y="204" width="39.9" height="14.3" rx="2.5" fill="#fdfdfd" stroke="#e4e4e4" stroke-width="0.6"/>
<text x="626.8" y="213.6" font-size="7.5" fill="#333" textLength="7.6" lengthAdjust="spacingAndGlyphs">10</text>
<path d="M647.3 210 L650 212.4 L652.7 210" stroke="#444" stroke-width="0.8" fill="none"/>
<text x="664.4" y="213.8" font-size="8" fill="#333" textLength="23.4" lengthAdjust="spacingAndGlyphs">entries</text>
<text x="699.25" y="213.8" font-size="8" fill="#333" textLength="26.9" lengthAdjust="spacingAndGlyphs">Search:</text>
<rect x="729.3" y="203.7" width="70" height="14.6" rx="2.5" fill="#fdfdfd" stroke="#e4e4e4" stroke-width="0.6"/>
<text x="621.3" y="234.3" font-size="7.9" font-weight="bold" fill="#222" textLength="34.6" lengthAdjust="spacingAndGlyphs">FacilityID</text>
<path d="M661.5 228.4 L663 231.2 L660 231.2 Z M661.5 235.1 L663 232.3 L660 232.3 Z" fill="#d6d6d6"/>
<text x="672.4" y="234.3" font-size="7.9" font-weight="bold" fill="#222" textLength="48" lengthAdjust="spacingAndGlyphs">FacilityName</text>
<path d="M726.0 228.4 L727.5 231.2 L724.5 231.2 Z M726.0 235.1 L727.5 232.3 L724.5 232.3 Z" fill="#d6d6d6"/>
<text x="737.4" y="234.3" font-size="7.9" font-weight="bold" fill="#222" textLength="31" lengthAdjust="spacingAndGlyphs">Address</text>
<path d="M773.7 228.4 L775.2 231.2 L772.2 231.2 Z M773.7 235.1 L775.2 232.3 L772.2 232.3 Z" fill="#d6d6d6"/>
<text x="784.6" y="234.3" font-size="7.9" font-weight="bold" fill="#222" textLength="20" lengthAdjust="spacingAndGlyphs">City</text>
<rect x="600.9" y="241" width="192" height="77.5" fill="#ebebeb"/>
<rect x="600.9" y="362" width="192" height="44" fill="#ebebeb"/>
<clipPath id="tclip"><rect x="594" y="240" width="200" height="166"/></clipPath><g clip-path="url(#tclip)">
<text x="605.5" y="254.4" font-size="7.8" fill="#222">1</text>
<text x="621.2" y="254.4" font-size="7.8" fill="#222" textLength="28" lengthAdjust="spacingAndGlyphs">520004</text>
<text x="672.4" y="254.4" font-size="7.8" fill="#222">MAYO CLINIC</text>
<text x="672.4" y="266.0" font-size="7.8" fill="#222">HEALTH</text>
<text x="672.4" y="277.6" font-size="7.8" fill="#222">SYSTEM-</text>
<text x="672.4" y="289.2" font-size="7.8" fill="#222">FRANCISCAN</text>
<text x="672.4" y="300.8" font-size="7.8" fill="#222">MEDICAL</text>
<text x="672.4" y="312.4" font-size="7.8" fill="#222">CENTER INC</text>
<text x="737.4" y="254.4" font-size="7.8" fill="#222">700 WEST</text>
<text x="737.4" y="266.0" font-size="7.8" fill="#222">AVENUE</text>
<text x="737.4" y="277.6" font-size="7.8" fill="#222">SOUTH</text>
<text x="784.6" y="254.4" font-size="7.8" fill="#222">LA CROSSE</text>
<text x="605.5" y="331.8" font-size="7.8" fill="#222">2</text>
<text x="621.2" y="331.8" font-size="7.8" fill="#222" textLength="28" lengthAdjust="spacingAndGlyphs">520008</text>
<text x="672.4" y="331.8" font-size="7.8" fill="#222">WAUKESHA</text>
<text x="672.4" y="343.40000000000003" font-size="7.8" fill="#222">MEMORIAL</text>
<text x="672.4" y="355.0" font-size="7.8" fill="#222">HOSPITAL</text>
<text x="737.4" y="331.8" font-size="7.8" fill="#222">725</text>
<text x="737.4" y="343.40000000000003" font-size="7.8" fill="#222">AMERICAN</text>
<text x="737.4" y="355.0" font-size="7.8" fill="#222">AVE</text>
<text x="784.6" y="331.8" font-size="7.8" fill="#222">WAUKESHA</text>
<text x="605.5" y="375.3" font-size="7.8" fill="#222">3</text>
<text x="621.2" y="375.3" font-size="7.8" fill="#222" textLength="28" lengthAdjust="spacingAndGlyphs">520009</text>
<text x="672.4" y="375.3" font-size="7.8" fill="#222">ASCENSION NE</text>
<text x="672.4" y="386.90000000000003" font-size="7.8" fill="#222">WISCONSIN -</text>
<text x="672.4" y="398.5" font-size="7.8" fill="#222">ST ELIZABETH</text>
<text x="672.4" y="410.1" font-size="7.8" fill="#222">CAMPUS</text>
<text x="737.4" y="375.3" font-size="7.8" fill="#222">1506 S</text>
<text x="737.4" y="386.90000000000003" font-size="7.8" fill="#222">ONEIDA ST</text>
<text x="784.6" y="375.3" font-size="7.8" fill="#222">APPLETON</text>
</g>
<rect x="794" y="176" width="6" height="236" fill="#f4f4f4"/>
<rect x="793.6" y="176.5" width="0.7" height="229.5" fill="#e0e0e0"/></svg></body></html>
